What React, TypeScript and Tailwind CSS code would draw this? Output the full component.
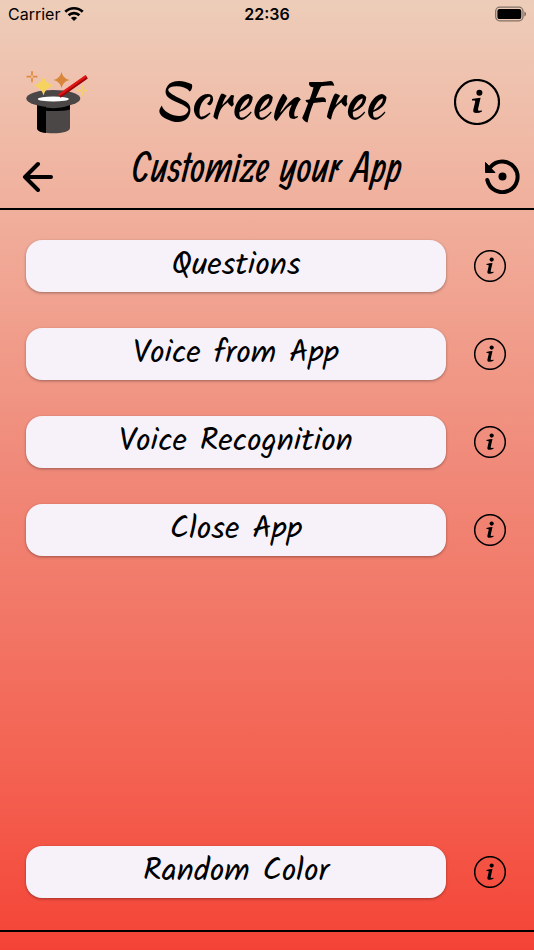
import React from 'react'

const options = ['Questions', 'Voice from App', 'Voice Recognition', 'Close App']

const StatusBar: React.FC = () => (
  <div className="grid grid-cols-3 items-center h-7 px-2 font-['Inter',sans-serif] text-base">
    <div className="flex items-center gap-1">
      <span>Carrier</span>
      <svg viewBox="0 0 20 15" className="w-5 h-4" fill="none" stroke="currentColor" strokeWidth="2.7">
        <path d="M1.3 5.3a12.4 12.4 0 0 1 17.4 0" />
        <path d="M4.6 8.8a7.7 7.7 0 0 1 10.8 0" />
        <path d="M10 14.6 6.9 11.5a4.4 4.4 0 0 1 6.2 0Z" fill="currentColor" stroke="none" />
      </svg>
    </div>
    <span className="text-center font-semibold">22:36</span>
    <svg viewBox="0 0 32 15" className="w-8 h-4 justify-self-end">
      <rect x="1.7" y="0.7" width="27.3" height="13.6" rx="4" fill="none" stroke="#000" strokeOpacity="0.45" strokeWidth="1.3" />
      <rect x="3.4" y="2.4" width="23.9" height="10.2" rx="2.2" />
      <path d="M30.4 5v5c1-.4 1.6-1.4 1.6-2.5s-.6-2.1-1.6-2.5Z" fillOpacity="0.5" />
    </svg>
  </div>
)

const MagicHat: React.FC = () => (
  <svg viewBox="9 0 64 84" className="w-16 h-21 shrink-0" role="img" aria-label="Magic hat">
    <path d="M22 44v24c0 7 33 7 33 0V44Z" fill="#4b4747" />
    <path d="M22 44v24c0 3 4 4.5 9 5V44Z" fill="#000" />
    <path d="M22 44c4 5.5 29 5.5 33 0v5.5c-6 2-27 2-33 0Z" fill="#000" />
    <ellipse cx="38.3" cy="38.5" rx="27" ry="8.6" fill="#4b4747" />
    <ellipse cx="38.3" cy="39" rx="15.5" ry="2.6" fill="#fff" />
    <path d="M28.5 16q2 8 10 9.5-8 2-10 10-2-8-10-10 8-1.5 10-9.5Z" fill="#f5d35e" />
    <path d="M46.5 12q1.5 6.5 8 8-6.5 1.5-8 8-1.5-6.5-8-8 6.5-1.5 8-8Z" fill="#d9863a" />
    <path
      d="M17 11.8v3.2M17 18.4v3.2M12.2 16.7h3.2M18.6 16.7h3.2"
      stroke="#e08a3e"
      strokeWidth="1.7"
      strokeLinecap="round"
    />
    <path
      d="M67 26v3M67 32v3M62.5 30.5h3M69 30.5h2.5"
      stroke="#f5d35e"
      strokeWidth="1.7"
      strokeLinecap="round"
    />
    <path d="M44.5 36.2 71.8 17" stroke="#9c0606" strokeWidth="3.6" />
    <path d="M43.8 35.2 71.2 16" stroke="#e01515" strokeWidth="2.4" />
  </svg>
)

const BackIcon: React.FC = () => (
  <svg viewBox="0 0 32 32" className="w-8 h-8" fill="none" stroke="currentColor" strokeWidth="4" strokeLinecap="round" strokeLinejoin="round">
    <path d="M16 4 3 17l13 13M3 17h26" />
  </svg>
)

const RestoreIcon: React.FC = () => (
  <svg viewBox="0 0 36 36" className="w-9 h-9">
    <path d="M3.3 22A15.3 15.3 0 1 0 6.5 9" fill="none" stroke="currentColor" strokeWidth="4" strokeLinecap="round" />
    <path d="M1.5 4.5v10h9.5Z" fill="currentColor" stroke="currentColor" strokeWidth="1" strokeLinejoin="round" />
    <circle cx="18.5" cy="18.5" r="4" />
  </svg>
)

const InfoIcon: React.FC<{ className: string }> = ({ className }) => (
  <svg viewBox="0 0 46 46" className={className}>
    <circle cx="23" cy="23" r="22" fill="none" stroke="currentColor" strokeWidth="2.2" />
    <circle cx="25.4" cy="13.8" r="3" />
    <path d="M18 20q4.5-.8 8.6-1.2L24 30.2q-.3 1.5 1.3 1.5l2.700-.3v1.200q-2.500 1.500-5.700 1.500-3.700 0-3-3.300l1.900-8q.3-1.300-1.200-1.300H18Z" />
  </svg>
)

const OptionRow: React.FC<{ label: string }> = ({ label }) => (
  <div className="flex items-center gap-7">
    <button
      type="button"
      className="flex-1 h-13 rounded-2xl bg-[#f7f2fa] shadow-[0_1px_3px_rgba(0,0,0,0.35)] font-['Kalam','Lato',sans-serif] text-[32px] leading-none"
    >
      {label}
    </button>
    <button type="button" aria-label={`About ${label}`} className="shrink-0">
      <InfoIcon className="w-8 h-8" />
    </button>
  </div>
)

export default function App() {
  return (
    <div className="flex flex-col min-h-screen text-black bg-linear-to-b from-[#edcdb9] via-[#f08878] to-[#f44336]">
      <StatusBar />

      <header className="border-b-2 border-black pt-8">
        <div className="flex items-center justify-between pl-6 pr-[34px]">
          <MagicHat />
          <h1 className="pb-1 pr-1 font-['Kaushan_Script','Liberation_Serif',serif] text-[50px] leading-none">
            ScreenFree
          </h1>
          <button type="button" aria-label="About ScreenFree">
            <InfoIcon className="w-[46px] h-[46px]" />
          </button>
        </div>
        <div className="flex items-center justify-between h-16 pl-[22px] pr-[14px]">
          <button type="button" aria-label="Back">
            <BackIcon />
          </button>
          <h2 className="pb-3 pr-1 font-['Ranga','Kavivanar',sans-serif] text-[46px] leading-none">
            Customize your App
          </h2>
          <button type="button" aria-label="Reset settings">
            <RestoreIcon />
          </button>
        </div>
      </header>

      <main className="flex flex-col flex-1 gap-9 pl-[26px] pr-7 pt-[30px] pb-8">
        {options.map(option => (
          <OptionRow key={option} label={option} />
        ))}
        <div className="mt-auto">
          <OptionRow label="Random Color" />
        </div>
      </main>

      <footer className="h-5 border-t-2 border-black" />
    </div>
  )
}
